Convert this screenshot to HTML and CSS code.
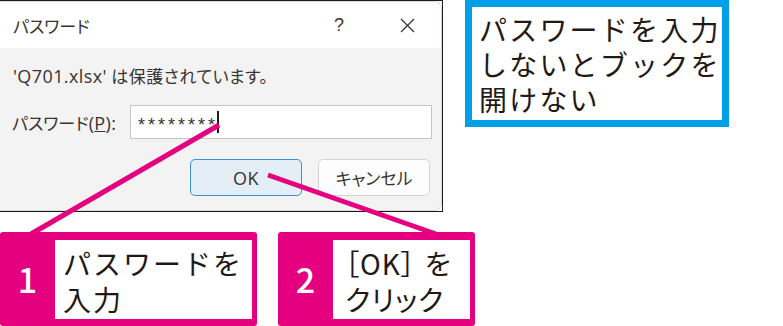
FILE: index.html
```html
<!DOCTYPE html>
<html lang="ja">
<head>
<meta charset="utf-8">
<link rel="stylesheet" href="styles.css">
</head>
<body>
<div class="page">
  <div class="top">
    <div class="dialog">
      <div class="window">
        <div class="titlebar">
          <span class="title">パスワード</span>
          <span class="help">?</span>
          <svg class="close" width="15" height="15" viewBox="0 0 15 15"><path d="M1 1L14 14M14 1L1 14" stroke="#3a3533" stroke-width="1.3" fill="none"/></svg>
        </div>
        <div class="body">
          <p class="msg"><span class="lat">'Q701.xlsx'</span> は保護されています。</p>
          <div class="pwrow">
            <span class="label">パスワード<span class="lat">(<u>P</u>):</span></span>
            <div class="input"><span class="stars">********</span><span class="caret"></span></div>
          </div>
          <div class="buttons">
            <div class="btn ok"><span class="lat">OK</span></div>
            <div class="btn">キャンセル</div>
          </div>
        </div>
      </div>
    </div>
    <div class="callout">パスワードを入力<br>しないとブックを<br>開けない</div>
  </div>
  <div class="bottom">
    <div class="step s1"><div class="num">1</div><div class="txt">パスワードを<br>入力</div></div>
    <div class="step s2"><div class="num">2</div><div class="txt">［OK］<span class="wo">を</span><br>クリック</div></div>
  </div>
  <svg class="lines" width="783" height="326" viewBox="0 0 783 326">
    <line x1="219" y1="125" x2="31" y2="234" stroke="#e4007f" stroke-width="5"/>
    <line x1="268" y1="175" x2="436" y2="234" stroke="#e4007f" stroke-width="5"/>
  </svg>
</div>
</body>
</html>
```

FILE: styles.css
```css
* { box-sizing: border-box; }
html, body { margin: 0; padding: 0; background: #ffffff; }
body { font-family: "Noto Sans CJK JP", "Noto Sans", sans-serif; color: #231815; }
.page { position: relative; width: 783px; height: 326px; overflow: hidden; }
.top { display: flex; align-items: flex-start; }

.dialog {
  width: 443px; height: 212px;
  border: 1px solid #231815; border-left: none;
}
.window {
  height: 100%;
  display: flex; flex-direction: column;
  border: 1px solid #d8d8d8; border-left: none;
  border-radius: 0 8px 8px 0;
  overflow: hidden;
  color: #3a3330;
  font-family: "Noto Sans CJK JP", sans-serif;
  font-size: 17px;
  font-feature-settings: "palt";
}
.lat { font-family: "Open Sans", "Noto Sans", sans-serif; font-size: 18px; letter-spacing: 0.4px; }
.titlebar {
  height: 46px; flex: none;
  display: flex; align-items: center;
  background: #ffffff;
  padding: 0 26px 0 13px;
}
.title { flex: 1; }
.help { font-family: "Liberation Sans", sans-serif; font-size: 18px; margin-right: 56px; }
.close { display: block; }
.body { flex: 1; background: #f3f3f3; }
.msg { margin: 17px 0 0 13px; line-height: 22px; letter-spacing: 0.5px; }
.pwrow { display: flex; align-items: center; margin-top: 18px; }
.label { width: 130px; padding-left: 12px; }
.input {
  width: 302px; height: 34px;
  background: #ffffff; border: 1px solid #c6c6c6;
  display: flex; align-items: center; padding-left: 7px;
}
.stars { font-family: "Liberation Sans", sans-serif; font-size: 18px; letter-spacing: 3px; padding-top: 6px; }
.caret { width: 2px; height: 22px; background: #231815; margin-left: -1px; }
.buttons { display: flex; gap: 16px; margin-top: 20px; padding-left: 190px; }
.btn {
  width: 112px; height: 37px;
  border: 1px solid #d3d3d3; border-radius: 5px;
  background: #fdfdfd;
  display: flex; align-items: center; justify-content: center;
}
.btn.ok { background: #e4eef7; border: 1.5px solid #3d8fd4; }

.callout {
  margin-left: 22px;
  width: 264px; height: 127px;
  border: 7px solid #00a0e9;
  padding: 5px 0 0 7px;
  font-size: 28px; line-height: 35px; letter-spacing: 2.2px;
}

.bottom { display: flex; gap: 21px; margin-top: 20px; }
.step {
  display: flex; height: 94px;
  background: #e4007f; border-radius: 3px;
  padding: 8px 5px 7px 0;
}
.s1 { width: 257px; }
.s2 { width: 197px; }
.num {
  width: 55px; flex: none;
  display: flex; align-items: center; justify-content: center;
  color: #ffffff; font-size: 34px; font-weight: 500;
  padding-bottom: 2px;
}
.txt {
  flex: 1; background: #ffffff;
  padding: 5px 0 0 8px;
  font-size: 28px; line-height: 36px; letter-spacing: 2px;
}
.s2 .txt { padding-left: 12px; font-feature-settings: "palt"; letter-spacing: 1px; }
.wo { margin-left: 9px; }

.lines { position: absolute; left: 0; top: 0; pointer-events: none; }
```
